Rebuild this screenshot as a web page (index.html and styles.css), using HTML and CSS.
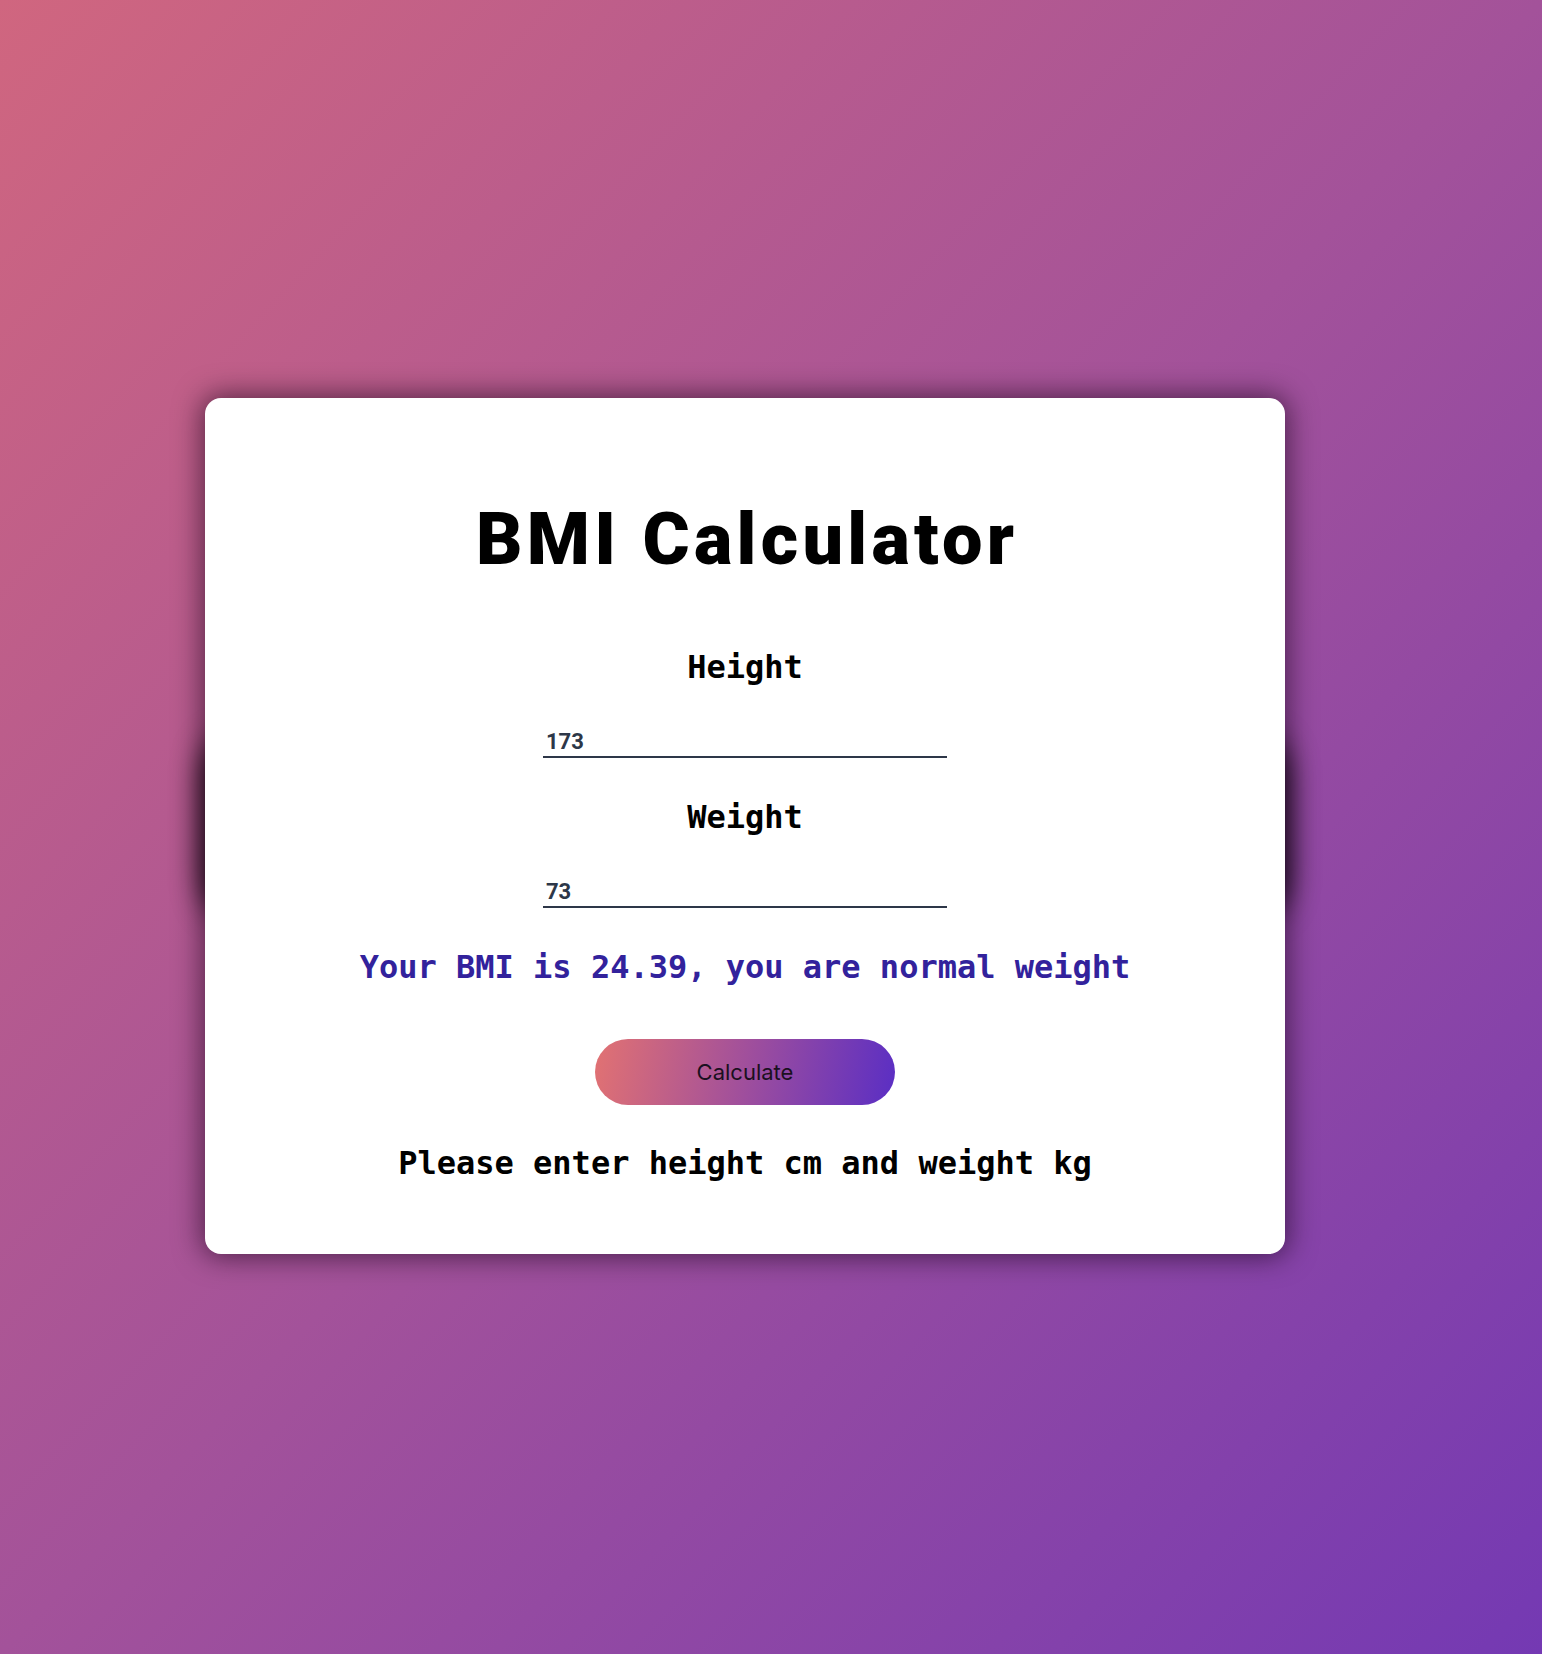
FILE: index.html
```html
<!DOCTYPE html>
<html lang="en">
<head>
<meta charset="utf-8">
<title>BMI Calculator</title>
<link rel="stylesheet" href="styles.css">
</head>
<body>
<main class="page">
  <section class="card">
    <h1 class="title">BMI Calculator</h1>
    <form class="form">
      <label class="label" for="height">Height</label>
      <input class="field" id="height" type="text" value="173">
      <label class="label" for="weight">Weight</label>
      <input class="field" id="weight" type="text" value="73">
    </form>
    <p class="result">Your BMI is 24.39, you are normal weight</p>
    <button class="btn" type="button">Calculate</button>
    <p class="hint">Please enter height cm and weight kg</p>
  </section>
</main>
</body>
</html>
```
FILE: styles.css
```css
html, body {
  margin: 0;
  padding: 0;
}
body {
  min-height: 1654px;
  background: linear-gradient(to bottom right, #d0667f 0%, #a3529a 50%, #7439b3 100%);
  font-family: "DejaVu Sans Mono", monospace;
}
.page {
  min-height: 1654px;
  display: flex;
  align-items: flex-start;
  padding-left: 205px;
  padding-top: 398px;
  box-sizing: border-box;
}
.card {
  position: relative;
  width: 1080px;
  height: 856px;
  box-sizing: border-box;
  padding-top: 106px;
  background: #ffffff;
  border-radius: 16px;
  box-shadow: 0 0 28px 3px rgba(20, 0, 20, 0.6);
  display: flex;
  flex-direction: column;
  align-items: center;
}
.card::before {
  content: "";
  position: absolute;
  left: 4px;
  right: 4px;
  top: calc(50% - 85px);
  height: 170px;
  border-radius: 30px;
  box-shadow: 0 0 30px 6px rgba(0, 0, 0, 0.95);
  z-index: -1;
}
.title {
  margin: 0;
  font-family: "Roboto", "Inter", sans-serif;
  font-weight: 900;
  font-size: 72px;
  line-height: 72px;
  color: #000;
  letter-spacing: 4.3px;
  text-indent: 4.3px;
}
.form {
  margin-top: 71px;
  display: flex;
  flex-direction: column;
  align-items: center;
}
.label {
  display: block;
  font-family: "DejaVu Sans Mono", monospace;
  font-weight: bold;
  font-size: 32px;
  line-height: 40px;
  color: #000;
  margin-bottom: 39px;
}
.field {
  display: block;
  width: 404px;
  height: 32px;
  box-sizing: border-box;
  padding: 3px 3px;
  border: none;
  border-bottom: 2px solid #2d3748;
  background: transparent;
  font-family: "Roboto", "Inter", sans-serif;
  font-weight: 700;
  font-size: 22px;
  line-height: 24px;
  color: #2d3748;
  outline: none;
  margin-bottom: 39px;
}
.field:last-child {
  margin-bottom: 0;
}
.result {
  margin: 39px 0 0;
  font-family: "DejaVu Sans Mono", monospace;
  font-weight: bold;
  font-size: 32px;
  line-height: 40px;
  color: #32229c;
}
.btn {
  margin-top: 52px;
  width: 300px;
  height: 66px;
  border: none;
  border-radius: 33px;
  background: linear-gradient(100deg, #e27272 0%, #a04f9c 50%, #5a2ec4 100%);
  font-family: "Inter", "Roboto", sans-serif;
  font-size: 22px;
  color: #1a1020;
  cursor: pointer;
}
.hint {
  margin: 38px 0 0;
  font-family: "DejaVu Sans Mono", monospace;
  font-weight: bold;
  font-size: 32px;
  line-height: 40px;
  color: #000;
}
```
